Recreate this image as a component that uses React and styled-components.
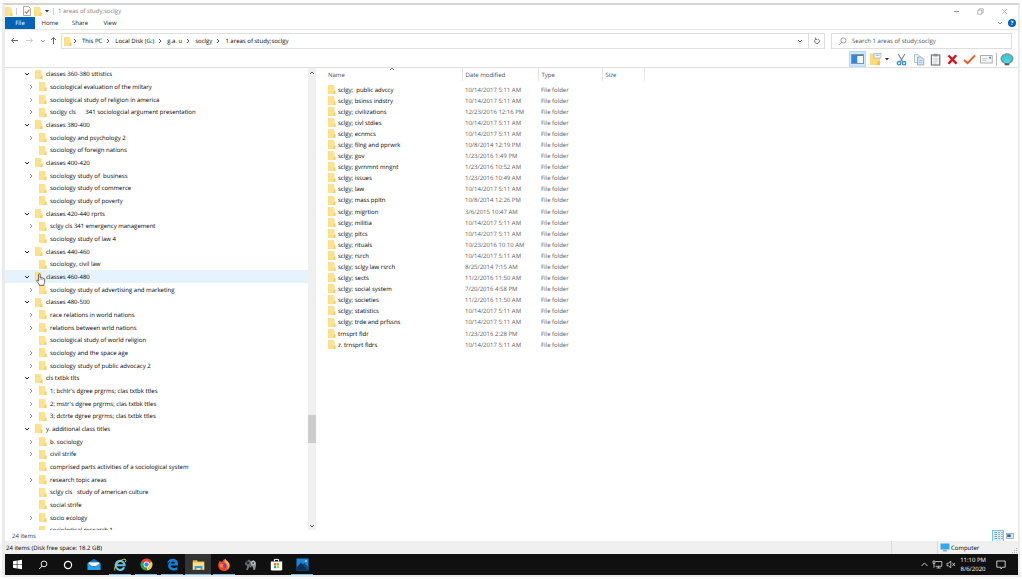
import styled, { createGlobalStyle, css } from "styled-components";

const tree = [
  { level: 0, open: true, name: "classes 360-380 sttistics" },
  { level: 1, arrow: true, name: "sociological evaluation of the miltary" },
  { level: 1, arrow: true, name: "sociological study of religion in america" },
  { level: 1, arrow: true, name: "soclgy cls      341 sociologcial argument presentation" },
  { level: 0, open: true, name: "classes 380-400" },
  { level: 1, arrow: true, name: "sociology and psychology 2" },
  { level: 1, name: "sociology of foreign nations" },
  { level: 0, open: true, name: "classes 400-420" },
  { level: 1, arrow: true, name: "sociology study of  business" },
  { level: 1, name: "sociology study of commerce" },
  { level: 1, name: "sociology study of poverty" },
  { level: 0, open: true, name: "classes 420-440 rprts" },
  { level: 1, arrow: true, name: "sclgy cls 341 emergency management" },
  { level: 1, name: "sociology study of law 4" },
  { level: 0, open: true, name: "classes 440-460" },
  { level: 1, name: "sociology, civil law" },
  { level: 0, open: true, name: "classes 460-480", hovered: true },
  { level: 1, arrow: true, name: "sociology study of advertising and marketing" },
  { level: 0, open: true, name: "classes 480-500" },
  { level: 1, arrow: true, name: "race relations in world nations" },
  { level: 1, arrow: true, name: "relations between wrld nations" },
  { level: 1, name: "sociological study of world religion" },
  { level: 1, arrow: true, name: "sociology and the space age" },
  { level: 1, arrow: true, name: "sociology study of public advocacy 2" },
  { level: 0, open: true, name: "cls txtbk tlts" },
  { level: 1, arrow: true, name: "1; bchlr's dgree prgrms; clas txtbk ttles" },
  { level: 1, arrow: true, name: "2; mstr's dgree prgrms; clas txtbk ttles" },
  { level: 1, arrow: true, name: "3; dctrte dgree prgrms; clas txtbk ttles" },
  { level: 0, open: true, name: "y. additional class titles" },
  { level: 1, arrow: true, name: "b. sociology" },
  { level: 1, arrow: true, name: "civil strife" },
  { level: 1, name: "comprised parts activities of a sociological system" },
  { level: 1, arrow: true, name: "research topic areas" },
  { level: 1, name: "sclgy cls   study of american culture" },
  { level: 1, name: "social strife" },
  { level: 1, arrow: true, name: "socio ecology" },
  { level: 1, name: "sociological research 1" },
];

const files = [
  ["sclgy;  public advccy", "10/14/2017 5:11 AM"],
  ["sclgy; bsinss indstry", "10/14/2017 5:11 AM"],
  ["sclgy; civilizations", "12/23/2016 12:16 PM"],
  ["sclgy; civl stdies", "10/14/2017 5:11 AM"],
  ["sclgy; ecnmcs", "10/14/2017 5:11 AM"],
  ["sclgy; filng and pprwrk", "10/8/2014 12:19 PM"],
  ["sclgy; gov", "1/23/2016 1:49 PM"],
  ["sclgy; gvrnmnt mngnt", "1/23/2016 10:52 AM"],
  ["sclgy; issues", "1/23/2016 10:49 AM"],
  ["sclgy; law", "10/14/2017 5:11 AM"],
  ["sclgy; mass ppltn", "10/8/2014 12:26 PM"],
  ["sclgy; migrtion", "3/6/2015 10:47 AM"],
  ["sclgy; militia", "10/14/2017 5:11 AM"],
  ["sclgy; pltcs", "10/14/2017 5:11 AM"],
  ["sclgy; rituals", "10/23/2016 10:10 AM"],
  ["sclgy; rsrch", "10/14/2017 5:11 AM"],
  ["sclgy; sclgy law rsrch", "8/25/2014 7:15 AM"],
  ["sclgy; sects", "11/2/2016 11:50 AM"],
  ["sclgy; social system", "7/20/2016 4:58 PM"],
  ["sclgy; societies", "11/2/2016 11:50 AM"],
  ["sclgy; statistics", "10/14/2017 5:11 AM"],
  ["sclgy; trde and prfssns", "10/14/2017 5:11 AM"],
  ["trnsprt fldr", "1/23/2016 2:28 PM"],
  ["z. trnsprt fldrs", "10/14/2017 5:11 AM"],
];

const crumbs = ["This PC", "Local Disk (G:)", "g.a. u", "soclgy", "1 areas of study;soclgy"];

function FolderIcon() {
  return (
    <svg width="8" height="9" viewBox="0 0 8 9">
      <path d="M0.3 0H6V1H6.6V5.4H7.4V9H0.3Z" fill="#fde391" />
      <path d="M0.3 0H1.2V9H0.3Z" fill="#fad97a" />
      <path d="M6 5.4H7.4V9H5.2Z" fill="#f6cf62" />
    </svg>
  );
}

function Chevron({ dir, color = "#555", size = 6 }) {
  const d = {
    down: "M1 2L3 4L5 2",
    up: "M1 4L3 2L5 4",
    right: "M2 1L4 3L2 5",
  };
  return (
    <svg width={size} height={size} viewBox="0 0 6 6">
      <path d={d[dir]} fill="none" stroke={color} strokeWidth="1" />
    </svg>
  );
}

function Caret({ color = "#333" }) {
  return (
    <svg width="6" height="6" viewBox="0 0 6 6">
      <path d="M1 2H5L3 4.5Z" fill={color} />
    </svg>
  );
}

function Arrow({ dir, color }) {
  const d = {
    left: "M8 4.5H1.5M4 2L1.5 4.5L4 7",
    right: "M1 4.5H7.5M5 2L7.5 4.5L5 7",
    up: "M4.5 8V1.5M2 4L4.5 1.5L7 4",
  };
  return (
    <svg width="9" height="9" viewBox="0 0 9 9">
      <path d={d[dir]} fill="none" stroke={color} strokeWidth="1" />
    </svg>
  );
}

function Magnifier({ color, size = 9 }) {
  return (
    <svg width={size} height={size} viewBox="0 0 9 9">
      <circle cx="5.4" cy="3.5" r="2.6" fill="none" stroke={color} strokeWidth="0.8" />
      <path d="M3.6 5.4L1 8.2" stroke={color} strokeWidth="0.8" />
    </svg>
  );
}

function HandCursor() {
  return (
    <svg width="10" height="13" viewBox="0 0 10 13">
      <path
        d="M2.6 8.2V1.6C2.6 0.5 4.2 0.5 4.2 1.6V4.8C4.4 4.2 5.6 4.3 5.7 5C6 4.6 7 4.7 7.1 5.4C7.5 5.1 8.6 5.3 8.6 6.2V8.8C8.6 10 7.9 10.6 7.8 12.3H3.4C3.2 10.9 1.8 9.9 0.9 8.2C0.4 7.2 1.6 6.6 2.6 8.2Z"
        fill="#fff"
        stroke="#444"
        strokeWidth="0.8"
      />
      <path d="M4.2 4.8V7M5.7 5.2V7M7.1 5.6V7.2" stroke="#666" strokeWidth="0.5" />
    </svg>
  );
}

const toolIcons = {
  "Preview pane": (
    <svg width="13" height="10" viewBox="0 0 13 10">
      <rect x="0.5" y="0.5" width="12" height="9" fill="#f4f8fc" stroke="#8095a8" />
      <rect x="1" y="1" width="11" height="1" fill="#60819e" />
      <rect x="1" y="2" width="5" height="7" fill="#2f8ae0" />
      <rect x="6" y="2" width="1" height="7" fill="#b8d4ee" />
    </svg>
  ),
  "Organize": (
    <svg width="13" height="14" viewBox="0 0 13 14">
      <path d="M1 1.5H6V5H11V13H1Z" fill="#fbdc7c" />
      <path d="M8.5 9H11V13H7.5Z" fill="#f0c64d" />
      <rect x="5" y="1.5" width="7" height="4.5" fill="#f7fafc" stroke="#9ab0c2" strokeWidth="0.7" />
      <path d="M6.5 3.2H10.5" stroke="#5f8fb8" strokeWidth="0.7" />
    </svg>
  ),
  "Cut": (
    <svg width="11" height="13" viewBox="0 0 11 13">
      <path d="M2.2 1L6.6 8.6M8.8 1L4.4 8.6" stroke="#7c8791" strokeWidth="1.1" />
      <circle cx="3" cy="10.2" r="1.7" fill="none" stroke="#2b8fd6" strokeWidth="1.3" />
      <circle cx="8" cy="10.2" r="1.7" fill="none" stroke="#2b8fd6" strokeWidth="1.3" />
    </svg>
  ),
  "Copy": (
    <svg width="12" height="13" viewBox="0 0 12 13">
      <path d="M1.5 1.5H5L7 3.5V9.5H1.5Z" fill="#eef3f8" stroke="#a3b2bf" strokeWidth="0.8" />
      <path d="M4.5 4H8.5L10.8 6.3V12H4.5Z" fill="#d2e3f4" stroke="#8fa3b5" strokeWidth="0.8" />
      <path d="M6 7.5H9.3M6 9.3H9.3" stroke="#9fbedb" strokeWidth="0.8" />
    </svg>
  ),
  "Paste": (
    <svg width="11" height="13" viewBox="0 0 11 13">
      <rect x="1.4" y="2" width="8.4" height="10" fill="#f2f4f5" stroke="#777" strokeWidth="1.2" />
      <rect x="3.5" y="0.8" width="4" height="2.6" fill="#8b8f93" />
      <path d="M3.4 6H7.8M3.4 8H7.8M3.4 10H6.5" stroke="#c0c6cb" strokeWidth="0.8" />
    </svg>
  ),
  "Delete": (
    <svg width="11" height="11" viewBox="0 0 11 11">
      <path d="M1.5 1.5L9.5 9.7M9.2 1.2L1.5 9.7" stroke="#d90f1c" strokeWidth="2.4" />
    </svg>
  ),
  "Rename": (
    <svg width="13" height="11" viewBox="0 0 13 11">
      <path d="M1 6L4.6 9.2L12 1.4" fill="none" stroke="#ee5a24" strokeWidth="2" />
    </svg>
  ),
  "Send": (
    <svg width="13" height="9" viewBox="0 0 13 9">
      <rect x="0.6" y="0.6" width="11.6" height="7.4" fill="#f5f6f7" stroke="#9b9b9b" strokeWidth="0.8" />
      <path d="M2.5 3.6H7M2.5 5.4H6" stroke="#b3b9bd" strokeWidth="0.8" />
      <rect x="9.2" y="1.8" width="1.8" height="1.8" fill="#3b8cc9" />
    </svg>
  ),
};

function ShellIcon() {
  return (
    <svg width="14" height="13" viewBox="0 0 14 13">
      <path
        d="M7 0.8C10.6 0.8 13.2 3.2 13 6C12.9 8.3 11.4 9.6 9.4 10L9 12H5L4.6 10C2.6 9.6 1.1 8.3 1 6C0.8 3.2 3.4 0.8 7 0.8Z"
        fill="#2fc0d2"
        stroke="#a2703c"
        strokeWidth="0.8"
      />
      <path d="M7 1.5V10M4.2 2.3L6.3 10M9.8 2.3L7.7 10M2 4.6L5.6 10M12 4.6L8.4 10" stroke="#8ce9ee" strokeWidth="0.5" />
      <path d="M5 10.2H9L8.7 12H5.3Z" fill="#2b6f93" />
    </svg>
  );
}

const apps = [
  {
    name: "Start",
    icon: (
      <svg width="11" height="11" viewBox="0 0 11 11">
        <path d="M1 2.2L4.8 1.6V5.2H1ZM5.4 1.5L10 0.8V5.2H5.4ZM1 5.8H4.8V9.4L1 8.8ZM5.4 5.8H10V10.2L5.4 9.5Z" fill="#fff" />
      </svg>
    ),
  },
  { name: "Search", icon: <Magnifier color="#fff" size={10} /> },
  {
    name: "Cortana",
    icon: (
      <svg width="10" height="10" viewBox="0 0 10 10">
        <circle cx="5" cy="5" r="3.6" fill="none" stroke="#fff" strokeWidth="1.2" />
      </svg>
    ),
  },
  {
    name: "Mail",
    icon: (
      <svg width="14" height="13" viewBox="0 0 14 13">
        <path d="M0.6 5L7 0.8L13.4 5V12H0.6Z" fill="#0f6fbe" />
        <path d="M1.6 4.6H12.4V8H1.6Z" fill="#fff" />
        <path d="M0.6 5L7 9L13.4 5V12H0.6Z" fill="#2aa0ea" />
        <path d="M2 4.5H12L7 8Z" fill="#f4fbff" />
      </svg>
    ),
  },
  {
    name: "Internet Explorer",
    running: true,
    icon: (
      <svg width="14" height="14" viewBox="0 0 14 14">
        <path d="M11.2 9.3A4.5 4.5 0 1 1 11.6 7.2H4" fill="none" stroke="#5cc4f2" strokeWidth="2.1" />
        <path d="M2 12.6C-0.6 10.4 7.2 0.8 12 1.2C13 1.5 13 2.8 12.2 4.2" fill="none" stroke="#f4c63c" strokeWidth="1" />
      </svg>
    ),
  },
  {
    name: "Chrome",
    running: true,
    icon: (
      <svg width="13" height="13" viewBox="0 0 13 13">
        <path d="M6.5 6.5L1.3 3.5A6 6 0 0 1 11.7 3.5Z" fill="#e04437" />
        <path d="M6.5 6.5L11.7 3.5A6 6 0 0 1 6.5 12.5Z" fill="#f8cc3c" />
        <path d="M6.5 6.5V12.5A6 6 0 0 1 1.3 3.5Z" fill="#2fa157" />
        <circle cx="6.5" cy="6.5" r="2.9" fill="#fff" />
        <circle cx="6.5" cy="6.5" r="2.2" fill="#4285f4" />
      </svg>
    ),
  },
  {
    name: "Edge",
    running: true,
    icon: (
      <svg width="13" height="13" viewBox="0 0 13 13">
        <path
          d="M1 6.2C1.5 2.6 3.9 0.8 6.8 0.8C10.3 0.8 12 3.2 12 6V7.6H4.6C4.8 9.4 6.3 10 8 10C9.4 10 10.5 9.6 11.4 9.1V11.4C10.4 12 9 12.4 7.3 12.4C4 12.4 2.1 10.5 2.1 7.8C2.1 5.9 3.2 4.5 4.8 3.8C3.2 4 1.8 4.9 1 6.2ZM4.8 5.6H8.9C8.9 4.2 8.2 3.4 7 3.4C5.7 3.4 5 4.3 4.8 5.6Z"
          fill="#1180dc"
        />
      </svg>
    ),
  },
  {
    name: "File Explorer",
    running: true,
    active: true,
    icon: (
      <svg width="13" height="12" viewBox="0 0 13 12">
        <path d="M0.8 1.2H5L6 2.4H12.2V10.8H0.8Z" fill="#e9b340" />
        <path d="M0.8 3.4H12.2V10.8H0.8Z" fill="#fde08a" />
        <path d="M2.6 7H10.4V11H8.6V9H4.4V11H2.6Z" fill="#3c9be0" />
      </svg>
    ),
  },
  {
    name: "Firefox",
    running: true,
    icon: (
      <svg width="14" height="14" viewBox="0 0 14 14">
        <path d="M1.2 7.6C1.2 5.2 2.2 3.6 3.2 2.6L3.8 4L5.4 3.6C6 2.2 7 1.2 8.2 0.8C8.4 2.4 11 3.2 12.2 5.4C13.6 9.4 11.2 13 7 13C3.6 13 1.2 10.6 1.2 7.6Z" fill="#f4442e" />
        <path d="M8.2 0.8C8.4 2.4 11 3.2 12.2 5.4C13.2 8 12 10.6 10.4 11.4C11.4 8.6 10 6.2 8 5C7.4 3.6 7.6 1.8 8.2 0.8Z" fill="#ffb92e" />
        <circle cx="6.8" cy="7.6" r="2.5" fill="#7a3ccc" />
        <path d="M2.4 6.6C4.2 5.4 6.4 6 7.2 7C5.6 7 5.4 8.6 6.8 9.6C4.4 10.2 2.6 8.8 2.4 6.6Z" fill="#ff8a2a" />
      </svg>
    ),
  },
  {
    name: "Camera",
    icon: (
      <svg width="13" height="13" viewBox="0 0 13 13">
        <path d="M1.2 4.4L5 1.4L7.4 3.4L6 7.4L3.8 12H2L3.4 8L1.4 7Z" fill="#6f7376" />
        <path d="M6.4 3.6L9.6 2L12 4.4V7.4L11 12H9.6L8.6 8.4L6.4 7.6Z" fill="#8e9296" />
        <circle cx="4" cy="4.8" r="1.6" fill="#2a2c2e" />
        <circle cx="9.2" cy="5" r="2" fill="#c6cacd" />
        <circle cx="9.2" cy="5" r="1" fill="#3a3d40" />
        <circle cx="6.6" cy="8.6" r="0.9" fill="#4fae4f" />
      </svg>
    ),
  },
  {
    name: "Store",
    icon: (
      <svg width="13" height="13" viewBox="0 0 13 13">
        <path d="M4.4 3.4V1.4H8.6V3.4" fill="none" stroke="#fff" strokeWidth="1" />
        <path d="M0.8 3.4H12.2V11.6L11.4 12.4H1.6L0.8 11.6Z" fill="#fff" />
        <rect x="4" y="5.2" width="2.2" height="2.2" fill="#f25022" />
        <rect x="6.8" y="5.2" width="2.2" height="2.2" fill="#7fba00" />
        <rect x="4" y="8" width="2.2" height="2.2" fill="#00a4ef" />
        <rect x="6.8" y="8" width="2.2" height="2.2" fill="#ffb900" />
      </svg>
    ),
  },
  {
    name: "Photos",
    running: true,
    icon: (
      <svg width="13" height="13" viewBox="0 0 13 13">
        <rect x="0.5" y="0.5" width="12" height="12" fill="#1c86dc" />
        <path d="M0.5 9.6L5 4.6L12.5 12.5H0.5Z" fill="#0b3157" />
        <path d="M6.6 6.4L8.4 5L12.5 9.2V12.5Z" fill="#124a80" />
        <circle cx="10" cy="3" r="0.8" fill="#fff" />
      </svg>
    ),
  },
];

export default function App() {
  return (
    <Screen>
      <GlobalStyle />
      <Frame>
        <TitleBar>
          <FolderIcon />
          <Divider />
          <QuickButton aria-label="Properties">
            <svg width="8" height="10" viewBox="0 0 8 10">
              <path d="M0.5 0.5H5.5L7.5 2.5V9.5H0.5Z" fill="#fff" stroke="#8a8a8a" strokeWidth="0.7" />
              <path d="M1.8 5.6L3.4 7.2L6.4 3.6" fill="none" stroke="#e0603a" strokeWidth="1.1" />
            </svg>
          </QuickButton>
          <QuickButton aria-label="New folder"><FolderIcon /></QuickButton>
          <QuickButton $narrow aria-label="Customize toolbar"><Caret /></QuickButton>
          <Divider />
          <Title>1 areas of study;soclgy</Title>
          <WindowButton aria-label="Minimize">
            <svg width="7" height="7" viewBox="0 0 7 7"><path d="M1 3.5H6" stroke="#777" strokeWidth="0.8" /></svg>
          </WindowButton>
          <WindowButton aria-label="Restore">
            <svg width="7" height="7" viewBox="0 0 7 7">
              <path d="M0.8 2.2H4.8V6.2H0.8ZM2.2 2.2V0.8H6.2V4.8H4.8" fill="none" stroke="#888" strokeWidth="0.6" />
            </svg>
          </WindowButton>
          <WindowButton aria-label="Close">
            <svg width="7" height="7" viewBox="0 0 7 7"><path d="M1 1L6 6M6 1L1 6" stroke="#888" strokeWidth="0.6" /></svg>
          </WindowButton>
        </TitleBar>

        <Ribbon>
          <FileTab>File</FileTab>
          <Tab>Home</Tab>
          <Tab>Share</Tab>
          <Tab>View</Tab>
          <RibbonEnd>
            <Chevron dir="down" color="#999" />
            <HelpButton aria-label="Help">?</HelpButton>
          </RibbonEnd>
        </Ribbon>

        <AddressRow>
          <NavButtons>
            <NavButton aria-label="Back"><Arrow dir="left" color="#666" /></NavButton>
            <NavButton aria-label="Forward"><Arrow dir="right" color="#ccc" /></NavButton>
            <NavButton $small aria-label="Recent locations"><Chevron dir="down" color="#999" /></NavButton>
            <NavButton $small aria-label="Up"><Arrow dir="up" color="#666" /></NavButton>
          </NavButtons>
          <AddressBox>
            <FolderIcon />
            {crumbs.map((crumb) => (
              <Crumb key={crumb}>
                <Chevron dir="right" />
                <CrumbButton>{crumb}</CrumbButton>
              </Crumb>
            ))}
            <AddressEnd>
              <IconButton aria-label="Previous locations"><Chevron dir="down" /></IconButton>
              <RefreshButton aria-label="Refresh">
                <svg width="8" height="8" viewBox="0 0 8 8">
                  <path d="M5.4 2.2A2.4 2.4 0 1 1 2.6 2.2M2.6 0.6V2.4H4.4" fill="none" stroke="#555" strokeWidth="0.8" />
                </svg>
              </RefreshButton>
            </AddressEnd>
          </AddressBox>
          <SearchBox>
            <Magnifier color="#888" />
            <SearchInput aria-label="Search" placeholder="Search 1 areas of study;soclgy" />
          </SearchBox>
        </AddressRow>

        <Toolbar>
          {Object.keys(toolIcons).map((name) => (
            <Tool key={name} $selected={name === "Preview pane"} $menu={name === "Organize"} aria-label={name}>
              {toolIcons[name]}
              {name === "Organize" && <Caret />}
            </Tool>
          ))}
          <ToolDivider />
          <Tool aria-label="Classic shell settings"><ShellIcon /></Tool>
        </Toolbar>

        <Panes>
          <Tree>
            {tree.map((node) => (
              <TreeRow key={node.name} $level={node.level} $hovered={node.hovered}>
                <TreeArrow>
                  {node.open && <Chevron dir="down" color="#222" />}
                  {node.arrow && <Chevron dir="right" color="#999" />}
                </TreeArrow>
                <FolderIcon />
                <TreeName>{node.name}</TreeName>
                {node.hovered && <Pointer><HandCursor /></Pointer>}
              </TreeRow>
            ))}
          </Tree>
          <Scrollbar>
            <IconButton aria-label="Scroll up"><Chevron dir="up" /></IconButton>
            <Track $grow={13} />
            <Thumb />
            <Track $grow={3} />
            <IconButton aria-label="Scroll down"><Chevron dir="down" /></IconButton>
          </Scrollbar>
          <FileArea>
            <FileTable>
              <colgroup>
                <Col $width={146} />
                <Col $width={76} />
                <Col $width={64} />
                <Col $width={42} />
              </colgroup>
              <thead>
                <tr>
                  <HeadCell $first>
                    Name
                    <SortMark><Chevron dir="up" color="#888" /></SortMark>
                  </HeadCell>
                  <HeadCell>Date modified</HeadCell>
                  <HeadCell>Type</HeadCell>
                  <HeadCell>Size</HeadCell>
                </tr>
              </thead>
              <FileRows>
                {files.map(([name, date]) => (
                  <FileRow key={name}>
                    <FileCell $first>
                      <FileName><FolderIcon />{name}</FileName>
                    </FileCell>
                    <FileCell>{date}</FileCell>
                    <FileCell>File folder</FileCell>
                    <FileCell />
                  </FileRow>
                ))}
              </FileRows>
            </FileTable>
          </FileArea>
        </Panes>

        <ItemsBar>
          <span>24 items</span>
          <ViewButtons>
            <ViewButton $selected aria-label="Details view">
              <svg width="9" height="9" viewBox="0 0 9 9">
                <path d="M0.5 1.5H3M0.5 3.5H3M0.5 5.5H3M0.5 7.5H3" stroke="#6b8aa0" strokeWidth="0.8" />
                <path d="M4 1.5H6M4 3.5H6M4 5.5H6M4 7.5H6M7 1.5H9M7 3.5H9M7 5.5H9M7 7.5H9" stroke="#8f9ba5" strokeWidth="0.8" />
              </svg>
            </ViewButton>
            <ViewButton aria-label="Large icons view">
              <svg width="8" height="6" viewBox="0 0 8 6">
                <rect x="0.5" y="0.5" width="7" height="5" fill="#dfe8ef" stroke="#8a98a4" strokeWidth="0.7" />
                <rect x="1.2" y="1.4" width="3.6" height="2.6" fill="#2d6c9a" />
              </svg>
            </ViewButton>
          </ViewButtons>
        </ItemsBar>

        <StatusBar>
          <StatusText>24 items (Disk free space: 18.2 GB)</StatusText>
          <StatusCell $width={46} />
          <StatusCell $width={81}>
            <svg width="10" height="9" viewBox="0 0 10 9">
              <rect x="0.5" y="0.5" width="9" height="6" fill="#33a9ea" />
              <path d="M3 7.8H7" stroke="#5e8aa8" strokeWidth="1" />
            </svg>
            Computer
            <Grip>
              <svg width="5" height="5" viewBox="0 0 5 5">
                <path d="M4 0H5V1H4ZM4 2H5V3H4ZM2 2H3V3H2ZM4 4H5V5H4ZM2 4H3V5H2ZM0 4H1V5H0Z" fill="#b5b5b5" />
              </svg>
            </Grip>
          </StatusCell>
        </StatusBar>

        <Taskbar>
          {apps.map((app) => (
            <TaskButton key={app.name} aria-label={app.name} $running={app.running} $active={app.active}>
              {app.icon}
            </TaskButton>
          ))}
          <Tray>
            <svg width="9" height="9" viewBox="0 0 9 9"><path d="M1.5 6L4.5 3L7.5 6" fill="none" stroke="#ddd" strokeWidth="0.9" /></svg>
            <svg width="11" height="9" viewBox="0 0 11 9">
              <path d="M3.5 1.5H9.8V6.3H3.5M6.6 6.3V8M4.6 8H8.8M1 1H3V3.4H1ZM2 3.4V7.8" fill="none" stroke="#ddd" strokeWidth="0.8" />
            </svg>
            <svg width="10" height="9" viewBox="0 0 10 9">
              <path d="M1 3.2H2.4L4.8 1.2V7.8L2.4 5.8H1ZM6.4 3L9 6M9 3L6.4 6" fill="none" stroke="#ddd" strokeWidth="0.8" />
            </svg>
            <Clock>
              <span>11:10 PM</span>
              <span>8/6/2020</span>
            </Clock>
            <svg width="10" height="10" viewBox="0 0 10 10">
              <path d="M0.8 1H9.2V7.2H6.6L5 9L5 7.2H0.8Z" fill="none" stroke="#ddd" strokeWidth="0.9" />
            </svg>
          </Tray>
        </Taskbar>
      </Frame>
    </Screen>
  );
}

const GlobalStyle = createGlobalStyle`
  * {
    box-sizing: border-box;
  }

  body {
    margin: 0;
    background: #fdfdfd;
    color: #000000;
    font-family: "Open Sans", "Noto Sans", sans-serif;
    font-size: 6px;
    line-height: 10px;
    text-rendering: geometricPrecision;
  }

  button, input {
    margin: 0;
    padding: 0;
    border: none;
    background: none;
    color: inherit;
    font: inherit;
    text-rendering: inherit;
  }

  svg {
    display: block;
    flex: none;
  }
`;

const Screen = styled.div`
  height: 100vh;
  padding: 3px 2px 2px;
`;

const Frame = styled.div`
  display: flex;
  flex-direction: column;
  height: 100%;
  background: #ffffff;
  border: 2px solid #ebebeb;
  border-top-color: #d4d4d4;
  border-left-width: 3px;
`;

const iconButton = css`
  display: flex;
  align-items: center;
  justify-content: center;
`;

const TitleBar = styled.header`
  display: flex;
  align-items: center;
  flex: none;
  height: 12px;
  padding-right: 2px;
  color: #7d7d7d;
`;

const Divider = styled.span`
  width: 1px;
  height: 7px;
  margin: 0 4px 0 3px;
  background: #cfcfcf;
`;

const QuickButton = styled.button`
  ${iconButton}
  width: ${(props) => (props.$narrow ? 7 : 11)}px;
`;

const Title = styled.span`
  flex: 1;
`;

const WindowButton = styled.button`
  ${iconButton}
  width: 24px;
  height: 12px;
`;

const Ribbon = styled.nav`
  display: flex;
  flex: none;
  height: 12px;
`;

const Tab = styled.button`
  width: 30px;
  color: #222222;
`;

const FileTab = styled(Tab)`
  background: #0063b6;
  color: #ffffff;
`;

const RibbonEnd = styled.div`
  display: flex;
  align-items: center;
  gap: 5px;
  margin-left: auto;
  padding-right: 2px;
`;

const HelpButton = styled.button`
  width: 8px;
  height: 8px;
  border-radius: 50%;
  background: #0063b6;
  color: #ffffff;
  font-weight: 700;
  line-height: 8px;
`;

const AddressRow = styled.div`
  display: flex;
  align-items: flex-start;
  flex: none;
  height: 22px;
  padding: 3px 6px 0 2px;
  border-top: 1px solid #e6e6e6;
`;

const NavButtons = styled.div`
  display: flex;
  width: 54px;
`;

const NavButton = styled.button`
  ${iconButton}
  width: ${(props) => (props.$small ? 11 : 15)}px;
  height: 15px;
`;

const AddressBox = styled.div`
  display: flex;
  align-items: center;
  flex: 1;
  height: 16px;
  padding-left: 2px;
  border: 1px solid #dedede;
`;

const Crumb = styled.div`
  display: flex;
  align-items: center;
  gap: 4px;
  margin-right: 3px;
`;

const CrumbButton = styled.button`
  white-space: nowrap;
`;

const AddressEnd = styled.div`
  display: flex;
  align-self: stretch;
  margin-left: auto;
`;

const IconButton = styled.button`
  ${iconButton}
  min-width: 16px;
`;

const RefreshButton = styled(IconButton)`
  border-left: 1px solid #dedede;
`;

const SearchBox = styled.label`
  display: flex;
  align-items: center;
  gap: 5px;
  width: 181px;
  height: 16px;
  margin-left: 6px;
  padding-left: 6px;
  border: 1px solid #dedede;
`;

const SearchInput = styled.input`
  flex: 1;
  min-width: 0;
  outline: none;

  &::placeholder {
    color: #4d4d4d;
    opacity: 1;
  }
`;

const Toolbar = styled.div`
  display: flex;
  align-items: center;
  justify-content: flex-end;
  flex: none;
  height: 17px;
  padding-right: 3px;
  border-bottom: 1px solid #e0e0e0;
`;

const Tool = styled.button`
  ${iconButton}
  gap: 2px;
  width: ${(props) => (props.$menu ? 27 : 17)}px;
  height: 16px;
  background: ${(props) => (props.$selected ? "#cce8ff" : "transparent")};
  border: 1px solid ${(props) => (props.$selected ? "#b5dcfa" : "transparent")};
`;

const ToolDivider = styled.span`
  width: 1px;
  height: 13px;
  margin: 0 1px;
  background: #b9b9b9;
`;

const Panes = styled.main`
  display: flex;
  flex: 1;
  min-height: 0;
`;

const Tree = styled.ul`
  width: 303px;
  margin: 0;
  padding: 0;
  overflow: hidden;
  list-style: none;
`;

const TreeRow = styled.li`
  position: relative;
  display: flex;
  align-items: center;
  height: 13px;
  padding-left: ${(props) => (props.$level === 0 ? 19 : 23)}px;
  background: ${(props) => (props.$hovered ? "#e5f3ff" : "transparent")};

  &:nth-child(3n + 1) {
    height: 12px;
  }
`;

const TreeArrow = styled.span`
  width: 11px;
`;

const TreeName = styled.span`
  margin-left: 3px;
  white-space: pre;
`;

const Pointer = styled.span`
  position: absolute;
  top: 3px;
  left: 31px;
  z-index: 1;
`;

const Scrollbar = styled.div`
  display: flex;
  flex-direction: column;
  width: 8px;
  background: #f0f0f0;

  button {
    min-width: 8px;
    height: 9px;
  }
`;

const Track = styled.div`
  flex: ${(props) => props.$grow};
`;

const Thumb = styled.div`
  height: 28px;
  background: #cdcdcd;
`;

const FileArea = styled.section`
  flex: 1;
  overflow: hidden;
`;

const FileTable = styled.table`
  table-layout: fixed;
  width: 328px;
  border-collapse: collapse;
`;

const Col = styled.col`
  width: ${(props) => props.$width}px;
`;

const HeadCell = styled.th`
  position: relative;
  height: 13px;
  padding: 0 0 0 ${(props) => (props.$first ? 12 : 3)}px;
  border-right: 1px solid #e5e5e5;
  color: #3b4f6b;
  font-weight: 400;
  text-align: left;
`;

const SortMark = styled.span`
  position: absolute;
  top: -2px;
  left: 50%;
`;

const FileRows = styled.tbody`
  &::before {
    content: "";
    display: block;
    height: 3px;
  }
`;

const FileRow = styled.tr`
  height: 11px;

  &:nth-child(11n) {
    height: 12px;
  }
`;

const FileCell = styled.td`
  padding: 0 0 0 ${(props) => (props.$first ? 12 : 3)}px;
  color: ${(props) => (props.$first ? "#000000" : "#5c5c5c")};
  white-space: pre;
`;

const FileName = styled.span`
  display: flex;
  align-items: center;
  gap: 2px;
`;

const ItemsBar = styled.div`
  display: flex;
  align-items: center;
  justify-content: space-between;
  flex: none;
  height: 11px;
  padding: 0 2px 0 7px;
  color: #2b3c54;
`;

const ViewButtons = styled.div`
  display: flex;
`;

const ViewButton = styled.button`
  ${iconButton}
  width: 12px;
  height: 12px;
  background: ${(props) => (props.$selected ? "#d5eefa" : "transparent")};
  border: 1px solid ${(props) => (props.$selected ? "#7cc4e8" : "transparent")};
`;

const StatusBar = styled.footer`
  display: flex;
  flex: none;
  height: 13px;
  background: #f0f0f0;
  line-height: 14px;
`;

const StatusText = styled.span`
  flex: 1;
  padding-left: 1px;
`;

const StatusCell = styled.span`
  position: relative;
  display: flex;
  align-items: center;
  gap: 1px;
  width: ${(props) => props.$width}px;
  padding-left: 2px;
  border-left: 1px solid #dcdcdc;
`;

const Grip = styled.span`
  position: absolute;
  right: 1px;
  bottom: 1px;
`;

const Taskbar = styled.footer`
  display: flex;
  flex: none;
  height: 21px;
  background: #101010;
  color: #ffffff;
`;

const TaskButton = styled.button`
  ${iconButton}
  position: relative;
  width: 26px;
  background: ${(props) => (props.$active ? "#333333" : "transparent")};

  &:nth-child(-n + 2) {
    width: 25px;
  }

  &::after {
    content: "";
    position: absolute;
    right: ${(props) => (props.$active ? 0 : 2)}px;
    bottom: 0;
    left: ${(props) => (props.$active ? 0 : 2)}px;
    height: 1px;
    background: ${(props) => (props.$running ? "#76b9ed" : "transparent")};
  }
`;

const Tray = styled.div`
  display: flex;
  align-items: center;
  gap: 3px;
  margin-left: auto;
  padding-right: 12px;
`;

const Clock = styled.time`
  display: flex;
  flex-direction: column;
  align-items: center;
  margin: 0 7px 0 1px;
  line-height: 9px;
`;
